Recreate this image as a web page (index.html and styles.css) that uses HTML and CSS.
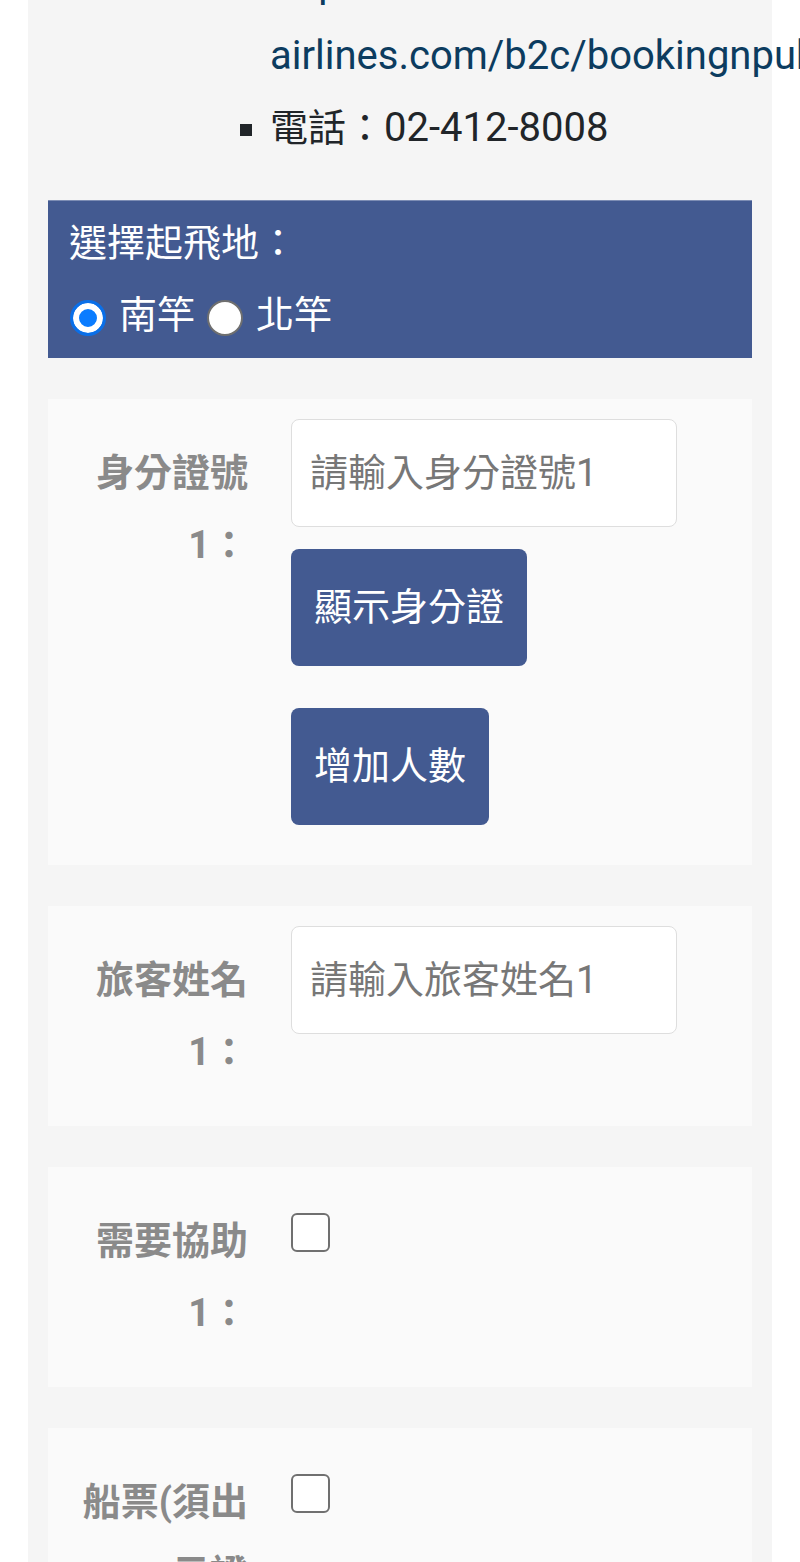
FILE: index.html
```html
<!DOCTYPE html>
<html lang="zh-Hant">
<head>
<meta charset="utf-8">
<title>訂位</title>
<link rel="stylesheet" href="styles.css">
</head>
<body>
<div class="page">
  <div class="container">
    <ul class="info">
      <li>網路訂位：<br><a class="link latin" href="#">https://www.uni-<span class="nowrap">airlines.com/b2c/bookingnpubsearch.aspx</span></a></li>
      <li>電話：<span class="latin">02-412-8008</span></li>
    </ul>

    <div class="origin">
      <div class="origin-title">選擇起飛地：</div>
      <div class="radios">
        <input class="radio" type="radio" name="from" id="from-s" checked>
        <label class="radio-label" for="from-s">南竿</label>
        <input class="radio" type="radio" name="from" id="from-n">
        <label class="radio-label" for="from-n">北竿</label>
      </div>
    </div>

    <div class="card card-first">
      <label class="label" for="id1">身分證號1：</label>
      <div class="field">
        <input class="text-input" id="id1" type="text" placeholder="請輸入身分證號1">
        <button class="btn btn-show" type="button">顯示身分證</button>
        <button class="btn btn-add" type="button">增加人數</button>
      </div>
    </div>

    <div class="card">
      <label class="label" for="name1">旅客姓名1：</label>
      <div class="field">
        <input class="text-input" id="name1" type="text" placeholder="請輸入旅客姓名1">
      </div>
    </div>

    <div class="card">
      <label class="label" for="help1">需要協助1：</label>
      <div class="field">
        <input class="check" id="help1" type="checkbox">
      </div>
    </div>

    <div class="card">
      <label class="label" for="ticket1">船票(須出示證件)1：</label>
      <div class="field">
        <input class="check" id="ticket1" type="checkbox">
      </div>
    </div>
  </div>
</div>
</body>
</html>
```

FILE: styles.css
```css
html, body {
  margin: 0;
  padding: 0;
  background: #ffffff;
}

body {
  font-family: Roboto, "Noto Sans CJK TC", "Noto Sans", sans-serif;
  font-size: 38px;
  line-height: 72px;
  color: #212529;
}

.page {
  width: 800px;
  height: 1562px;
  overflow: hidden;
}

.container {
  display: flow-root;
  margin: 0 28px;
  padding: 0 20px 200px;
  background: #f5f5f5;
}

.info {
  margin: -124px 0 37px;
  padding: 0 0 0 222px;
  list-style-type: square;
}

.latin {
  font-size: 40px;
}

.link {
  color: #0c3c5f;
  text-decoration: none;
}

.nowrap {
  white-space: nowrap;
}

.origin {
  background: #435a91;
  color: #ffffff;
  padding: 6px 21px 7px;
  border-top: 1px solid #7d8db4;
  margin-top: -1px;
}

.radios {
  display: flex;
  align-items: center;
  height: 72px;
}

.radio {
  appearance: none;
  -webkit-appearance: none;
  box-sizing: border-box;
  width: 36px;
  height: 36px;
  margin: 6px 0 0 1px;
  border-radius: 50%;
  border: 2px solid #6f6f6f;
  background: #ffffff;
  flex: none;
}

.radio:checked {
  border: 3px solid #0a6fe8;
  background: #0a7cff;
  box-shadow: inset 0 0 0 6px #ffffff;
}

.radio-label {
  margin: 0 11px 0 13px;
}

.card {
  display: flex;
  align-items: flex-start;
  background: #fafafa;
  padding: 20px 0;
  margin-top: 41px;
}

.card-first {
  margin-top: 41px;
}

.label {
  box-sizing: border-box;
  width: 168px;
  margin-left: 32px;
  padding: 18px 0;
  text-align: right;
  font-weight: bold;
  color: #8a8a8a;
  flex: none;
}

.field {
  margin-left: 43px;
  display: flex;
  flex-direction: column;
  align-items: flex-start;
}

.text-input {
  box-sizing: border-box;
  width: 386px;
  height: 108px;
  margin: 0;
  padding: 0 18px;
  border: 1px solid #dedede;
  border-radius: 8px;
  background: #ffffff;
  font: inherit;
  color: #333333;
  outline: none;
}

.text-input::placeholder {
  color: #777777;
}

.btn {
  box-sizing: border-box;
  margin: 22px 0 0;
  padding: 22px 23px;
  border: none;
  border-radius: 8px;
  background: #435a91;
  color: #ffffff;
  font: inherit;
  line-height: 73px;
}

.btn-add {
  margin-top: 42px;
  margin-bottom: 20px;
}

.check {
  appearance: none;
  -webkit-appearance: none;
  box-sizing: border-box;
  width: 39px;
  height: 39px;
  margin: 26px 0 0;
  border: 2px solid #707070;
  border-radius: 6px;
  background: #ffffff;
}
```
